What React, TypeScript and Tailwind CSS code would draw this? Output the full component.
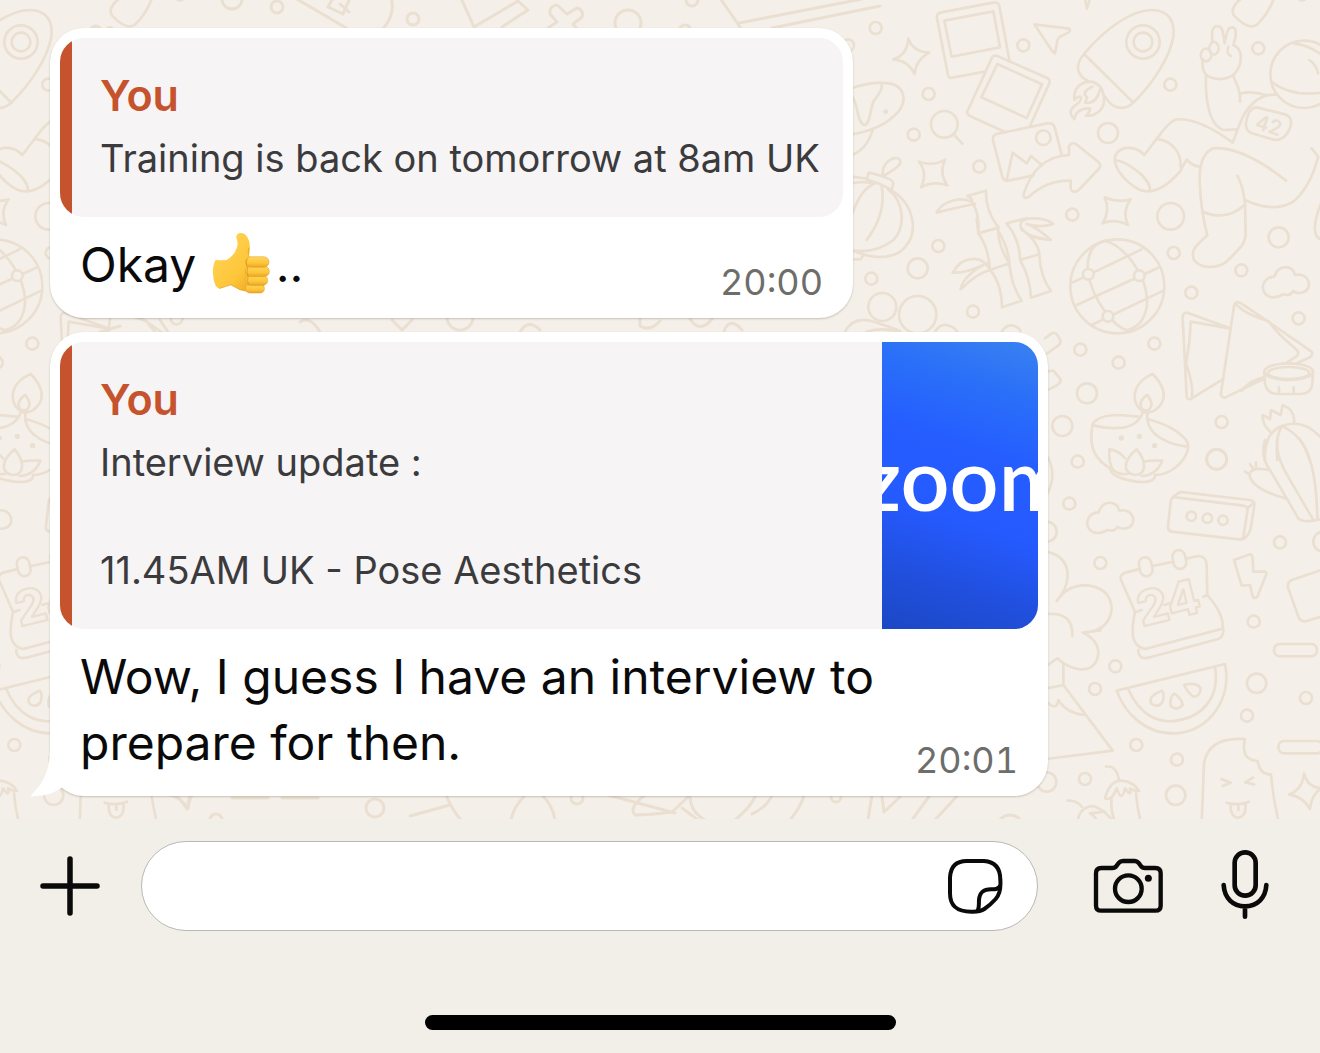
import React from 'react';

const TILE_WIDTH = 1122;

function Dots({ items, r }: { items: [number, number][]; r: number }) {
  return (
    <>
      {items.map(([x, y]) => (
        <circle key={`${x}-${y}`} cx={x} cy={y} r={r} />
      ))}
    </>
  );
}

const CLOUD =
  'M1298 232C1258 228 1258 172 1303 170C1315 130 1360 135 1365 165C1412 155 1420 212 1385 218Q1370 222 1360 213Q1350 230 1330 223Q1315 232 1298 232Z';

function Wallpaper() {
  return (
    <svg
      aria-hidden="true"
      className="pointer-events-none absolute inset-0 h-full w-full"
      fill="none"
      stroke="#eadfd1"
      strokeWidth="8"
      strokeLinecap="round"
      strokeLinejoin="round"
    >
      <g id="doodles">
        {/* rocket, photos, astronaut */}
        <g transform="translate(840 0) scale(.33333)">
          <Dots r={18} items={[[107, 84], [550, 136], [266, 282], [221, 404], [418, 500], [991, 254], [1255, 145], [697, 644], [24, 136]]} />
          <Dots r={30} items={[[804, 399], [1316, 712]]} />
          <circle cx="992" cy="649" r="40" />
          <path d="M205 115Q218 155 268 158Q228 178 224 222Q205 182 160 178Q202 165 205 115Z" />
          <path d="M237 485Q280 500 315 479Q296 520 322 556Q280 542 243 562Q264 520 237 485Z" />
          <path d="M794 592Q835 610 872 598Q845 635 864 675Q825 655 788 670Q812 630 794 592Z" />
          <path d="M508 180L478 18Q475 5 460 8L300 38Q288 42 291 55L324 225Q326 236 337 233L435 215M313 62L460 34L480 142L335 170Z" />
          <path d="M495 396L388 347Q378 340 384 330L455 175Q460 163 472 168L622 234Q632 240 628 250L570 378M472 192L606 253L560 354L424 292Z" />
          <path d="M665 465L645 385Q640 366 622 370L470 402Q457 406 459 420L487 530Q491 543 505 542L580 526M500 540L518 458L560 490L573 468L606 496" />
          <circle cx="610" cy="413" r="22" />
          <path d="M550 585Q585 470 687 465V440Q692 425 708 432L776 487Q785 497 776 507L716 570Q700 583 692 567V542Q620 540 565 592Q550 597 550 585Z" />
          <path d="M583 73L688 86Q693 90 686 97L660 110Q650 118 650 135L645 160L638 155Z" />
          <path d="M735 -6L741 26L750 -6" />
          <path d="M732 162C800 80 880 30 935 30C990 30 1005 70 1000 110C990 170 940 250 880 308ZM732 162C700 200 715 230 745 243M880 308C850 335 815 325 795 290" />
          <circle cx="909" cy="126" r="50" />
          <circle cx="909" cy="126" r="28" />
          <path d="M755 245C720 245 700 265 703 300C718 280 735 292 712 312C690 325 685 340 703 358C706 335 725 325 750 325C750 335 745 342 738 347C770 350 795 325 792 295C790 265 775 250 755 245M757 260C733 270 728 285 742 292L735 308C765 312 775 290 780 268" />
          <circle cx="1392" cy="223" r="101" />
          <path d="M1360 130C1410 135 1445 165 1445 165M1295 245Q1350 290 1445 278M1408 180Q1430 195 1434 220" />
          <path d="M1118 125C1112 90 1120 78 1132 78C1148 78 1150 100 1154 130C1160 95 1165 80 1178 82C1192 85 1188 110 1180 135C1215 150 1205 200 1180 225C1150 245 1110 238 1095 220C1085 205 1088 190 1088 178M1165 140C1160 155 1165 165 1172 168" />
          <ellipse cx="1098" cy="165" rx="16" ry="19" />
          <ellipse cx="1122" cy="145" rx="14" ry="19" />
          <path d="M1098 225C1095 290 1105 375 1150 390L1190 388M1178 225C1195 260 1202 280 1200 305M1203 280Q1240 272 1275 285" />
          <path d="M1310 284C1250 280 1215 330 1200 370L1178 428C1120 385 1060 355 1010 358Q990 362 955 410L913 465C890 440 850 435 830 460C810 490 850 545 900 570C940 585 980 560 1020 515L1040 478Q1055 497 1080 500" />
          <path d="M825 482C850 475 940 540 928 572M955 418C990 420 1025 455 1022 500" />
          <path d="M1250 322L1335 343Q1358 352 1352 378Q1338 420 1305 420L1235 400Q1215 390 1218 370Q1225 322 1250 322Z" />
          <text x="1242" y="384" transform="rotate(18 1242 384)" fontFamily="Inter, sans-serif" fontSize="62" strokeWidth="1" fill="#eadfd1" fontWeight="500">42</text>
          <path d="M1338 542C1260 480 1180 440 1120 445C1085 460 1075 500 1080 560C1082 620 1090 660 1102 706C1070 735 1050 750 1062 780C1085 810 1140 805 1165 780L1205 738Q1217 720 1217 700L1215 610Q1210 560 1192 527M1088 635Q1160 665 1213 615M1215 600C1290 635 1350 625 1380 585Q1415 545 1435 470L1415 445M1445 605C1415 680 1420 710 1445 720" />
          <path d="M1210 -8C1180 10 1170 35 1185 50Q1230 95 1255 70Q1285 40 1302 -5M1375 -4Q1385 5 1395 -2" />
          <circle cx="313" cy="373" r="40" />
          <path d="M340 402L367 431" />
          <path d="M35 265C90 245 140 245 165 255C200 275 195 310 175 335C140 375 90 395 35 403M125 255C130 270 110 290 100 305C90 330 90 375 72 375C50 365 55 315 38 292M100 385Q80 450 35 465" />
          <circle cx="137" cy="335" r="3" />
          <path d="M35 530L75 535M86 518Q160 535 160 550L155 570Q120 550 80 538ZM128 525Q125 490 160 475Q185 470 180 492Q170 505 135 525M155 572C220 610 235 690 200 735C170 780 100 780 35 750M105 550Q60 570 38 640M125 560Q140 640 80 720M145 570C190 600 200 680 160 720Q110 760 40 752M35 550Q70 543 100 550M42 778H62L70 765" />
          <path d="M290 638C310 600 370 585 405 612Q360 620 290 638M382 588L438 572Q435 630 475 683L415 700Q420 640 395 605Q400 596 382 588" />
          <path d="M500 670L560 655M545 690Q530 655 580 655Q620 655 640 672Q600 685 560 672M545 685Q560 710 632 720Q600 690 570 675" />
        </g>
        {/* bamboo, globe, napkins, lamp */}
        <g transform="translate(840 220) scale(.33333)">
          <path d="M410 -5L415 40Q445 80 450 150L508 130Q505 80 470 25L415 40M475 20Q470 70 508 130Q515 200 545 242L486 262Q485 190 450 150M500 10Q540 60 540 120L598 103Q595 70 562 42M540 120Q570 170 573 233L633 213Q600 170 598 103M545 25Q570 60 632 58" />
          <path d="M450 150Q430 110 390 118Q360 120 338 158Q380 160 440 130M450 150Q410 160 362 208Q370 165 440 130" />
          <Dots r={18} items={[[295, 78], [94, 176], [399, 275], [1001, 99], [1054, 218], [1204, 151], [1376, 295], [943, 371], [721, 389], [836, 428], [1145, 606]]} />
          <Dots r={30} items={[[233, 145], [741, 520], [667, 618], [1130, 718]]} />
          <circle cx="127" cy="261" r="42" />
          <circle cx="233" cy="284" r="56" />
          <path d="M285 335Q300 312 318 315Q340 318 352 335M485 335Q500 310 525 318Q540 325 542 335M15 335Q40 290 90 302Q120 310 180 332M80 335Q120 322 170 333" />
          <path d="M615 355L635 340Q645 335 652 345L660 358Q665 368 655 376L615 405M620 455L640 452L662 478Q662 490 650 496L620 512" />
          <circle cx="832" cy="199" r="141" />
          <path d="M743 150Q740 75 795 62C860 80 930 180 920 260Q910 320 860 330C820 320 760 240 745 165M697 188L905 88M710 255L955 143M755 315L970 212" />
          <g fill="#f4f0e9">
            <Dots r={16} items={[[745, 163], [898, 167], [804, 289]]} />
          </g>
          <path d={CLOUD} />
          <path d="M1170 325L1042 278Q1027 278 1028 292L1040 530Q1042 540 1052 537L1148 478M1168 325L1052 305Q1050 370 1038 430Q1062 500 1055 530" />
          <path d="M1275 475L1155 533Q1140 530 1143 520L1182 258Q1185 242 1200 248L1285 305L1415 395Q1420 405 1410 412L1370 430M1190 255Q1220 285 1285 303Q1310 340 1365 385Q1385 400 1365 412L1340 428M1205 512Q1230 480 1272 472" />
          <ellipse cx="1346" cy="455" rx="73" ry="25" />
          <ellipse cx="1346" cy="459" rx="62" ry="18" />
          <path d="M1273 455L1275 490Q1280 520 1310 522H1385Q1415 518 1417 490L1419 455M1317 502V520M1361 502V520" />
          <path d="M938 462Q985 510 965 550Q945 580 918 578C870 560 870 490 938 462ZM922 525Q945 555 925 570Q900 575 902 550Q905 535 922 525Z" />
          <path d="M908 578Q895 615 850 623Q800 628 757 615Q770 585 840 585L895 590M757 615C745 690 770 720 810 745M922 580V600C930 650 990 675 1043 680M925 598C990 615 1045 650 1045 680C1040 725 990 765 945 765" />
          <g fill="#eadfd1"><Dots r={4} items={[[844, 654], [898, 649], [944, 677]]} /></g>
          <path d="M1290 635Q1265 610 1268 585L1290 597L1293 570L1322 585L1328 555Q1365 570 1362 605M1275 725Q1270 640 1325 618Q1390 595 1440 650M1312 720Q1305 650 1325 620M1330 620Q1390 650 1408 720" />
        </g>
        {/* lotus, brick, calendar */}
        <g transform="translate(1030 440) scale(.33333)">
          <path d="M285 55Q265 30 238 28Q235 70 250 90Q270 108 300 100M320 28C355 70 345 105 315 105C280 100 275 65 320 28ZM340 65Q370 60 397 62Q380 105 335 108M240 85Q245 115 320 125Q370 130 375 110" />
          <path d="M705 0Q690 50 720 90L805 235Q820 250 870 238M742 -5Q735 50 780 120L850 240M808 -5Q860 60 862 238M715 90Q670 80 658 100Q660 145 765 175M645 95L658 103M660 72L668 84M678 66V80" />
          <Dots r={18} items={[[143, 65], [118, 191], [211, 369], [750, 307], [671, 545]]} />
          <Dots r={30} items={[[560, 58], [880, 305], [50, 275]]} />
          <path d="M50 45Q84 105 50 165" />
          <path d={CLOUD} transform="translate(-1097 47)" />
          <path d="M437 172L640 197Q655 198 652 215L640 290Q636 300 625 298L425 275Q412 272 414 258L422 185Q425 170 437 172M428 172L445 159Q452 155 462 157L660 180Q675 183 673 197L662 265Q655 290 638 298M652 205L672 188" />
          <Dots r={14} items={[[484, 229], [532, 235], [579, 241]]} />
          <path d="M325 388L285 398Q268 405 273 420L315 515Q305 560 309 590Q315 620 345 627L578 566V550Q575 515 532 465L530 375Q528 348 505 348L468 356M368 378L427 366M315 517L335 510M520 470L532 465M325 630Q325 660 355 653L565 597Q582 590 580 565M403 495L420 490" />
          <rect x="328" y="352" width="38" height="57" rx="19" transform="rotate(-12 347 380)" />
          <rect x="429" y="330" width="38" height="57" rx="19" transform="rotate(-12 448 358)" />
          <text x="336" y="560" transform="rotate(-14 336 560)" fontFamily="Inter, sans-serif" fontSize="144" fontWeight="800" strokeWidth="7">24</text>
          <path d="M612 360L660 343Q668 345 668 355L670 395L705 395Q712 398 708 405L682 470Q672 480 668 468L660 435L635 437Z" />
          <path d="M880 388L785 420Q770 428 775 445L805 530Q812 547 830 543L880 528" />
          <path d="M50 335Q115 350 113 410Q110 450 80 483Q115 430 180 437Q245 450 245 510Q235 575 158 578Q205 600 205 640Q200 690 150 688Q115 685 82 655L50 677M50 522Q130 515 127 588M160 578L212 571" />
        </g>
        {/* melon, ice pop, aubergines */}
        <g transform="translate(1030 630) scale(.33333)">
          <path d="M100 100V165L248 362L50 387M50 175L100 165M50 215Q80 245 85 210Q110 250 165 255" />
          <path d="M260 182L585 102C605 200 545 300 440 310C340 315 280 240 260 182ZM295 178C330 260 390 280 440 272C520 260 570 200 555 110" />
          <path d="M395 182Q405 190 398 215Q385 235 365 222Q350 200 395 182ZM432 190Q455 205 458 225Q440 245 422 228Q418 205 432 190ZM462 165Q500 155 512 175Q510 200 490 200Q475 190 462 165Z" />
          <rect x="732" y="42" width="129" height="37" rx="17" />
          <rect x="745" y="333" width="133" height="37" rx="17" />
          <Dots r={18} items={[[256, 109], [195, 177], [651, 257], [319, 345], [441, 389], [165, 447], [828, 204]]} />
          <Dots r={29} items={[[680, 160], [437, 496], [50, 456]]} />
          <path d="M515 580L522 400Q535 320 645 327Q630 390 683 393Q690 435 723 433Q730 510 747 580M575 447L602 458L578 468M670 442L646 457L672 463M590 518Q625 528 657 515M602 522Q600 562 625 563Q650 560 646 522M625 525V540" />
          <path d="M822 430Q832 472 875 475Q845 490 840 537Q820 500 777 493Q817 480 822 430Z" />
          <path d="M228 410Q260 405 267 452M225 505Q240 450 275 452Q310 455 327 483Q310 482 300 475Q305 505 285 475Q275 520 260 475Q245 515 225 505M245 510Q240 540 257 580M318 490Q322 540 334 580M113 512Q140 510 155 530M143 580Q145 530 190 528Q225 540 250 575M180 550L225 545M180 550Q200 560 200 578" />
        </g>
      </g>
      <use href="#doodles" x={-TILE_WIDTH} />
      <g strokeWidth="3">
        {/* top edge */}
        <circle cx="232" cy="-1" r="10" />
        <circle cx="277" cy="7" r="6" />
        <circle cx="413" cy="19" r="6" />
        <circle cx="96" cy="31" r="5" />
        <circle cx="628" cy="23" r="13" />
        <circle cx="692" cy="0" r="6" />
        <circle cx="685" cy="31" r="6" />
        <path d="M295 -2L348 29M391 -2Q396 14 382 30M333 -2L328 7L343 14L350 -2M340 4L349 12" />
        <path d="M461 -2L474 27L518 1L528 10L502 27M548 28L557 22L550 14Q549 6 557 5L567 14L577 8Q584 10 582 17L573 24L577 29M720 -2L740 27M739 23L862 -1M772 28L880 6" />
        {/* between the messages */}
        <path d="M100 332L120 326M160 320L168 332M300 322Q310 315 320 332M392 320L402 330L412 320M520 332Q528 318 540 330M640 319V326Q650 332 660 321M690 319Q700 334 712 319M724 331Q730 316 742 330" />
        <circle cx="460" cy="317" r="13" />
        {/* bottom edge */}
        <circle cx="375" cy="808" r="9" />
        <circle cx="216" cy="820" r="6" />
        <circle cx="577" cy="798" r="6" />
        <circle cx="836" cy="797" r="5" />
        <circle cx="1010" cy="828" r="13" />
        <path d="M177 795L187 809L190 795M232 798H268M282 798H318M410 816L450 805M446 795Q452 810 461 820M525 795Q513 808 511 820M542 795Q553 806 555 820M608 795L675 813M645 795Q628 808 635 815Q650 815 672 812L690 795M690 795Q690 812 705 820M682 808L698 820M735 820Q750 808 756 795M772 795Q768 806 752 814M790 820Q802 805 804 795M868 820L872 795M884 812L900 797M884 812L882 797M912 820L930 795M935 820L958 795" />
      </g>
    </svg>
  );
}

function ThumbsUp() {
  return (
    <svg role="img" aria-label="thumbs up" viewBox="62 36 182 188" className="-my-2 mr-1 inline-block h-[62px] w-[62px] align-[-4px]">
      <defs>
        <linearGradient id="palm" x1="0" y1="0" x2="1" y2="1">
          <stop offset="0" stopColor="#ffd65a" />
          <stop offset=".6" stopColor="#fec63a" />
          <stop offset="1" stopColor="#e59a1c" />
        </linearGradient>
        <linearGradient id="finger" x1="0" y1="0" x2="0" y2="1">
          <stop offset="0" stopColor="#ffd75c" />
          <stop offset=".6" stopColor="#fdc537" />
          <stop offset="1" stopColor="#eaa52a" />
        </linearGradient>
      </defs>
      <path fill="url(#palm)" d="M76 121Q95 122 110 121Q135 105 141 82Q145 68 139 54Q137 40 153 39Q170 40 177 62Q183 84 177 107Q182 118 218 113L222 214Q190 222 150 211L122 196Q105 200 88 207Q76 208 70 180Q64 140 76 121Z" />
      <path fill="none" stroke="#e7a226" strokeWidth="2.5" d="M88 207Q105 202 122 196L150 211Q170 217 200 219M176 84Q174 98 176 107" />
      <g fill="url(#finger)" stroke="#e09a22" strokeWidth="1.5">
        <rect x="167" y="194" width="57" height="27" rx="13" />
        <rect x="167" y="167" width="67" height="31" rx="15" />
        <rect x="166" y="140" width="73" height="31" rx="15" />
        <rect x="167" y="111" width="71" height="32" rx="16" />
      </g>
      <path fill="none" stroke="#d58a19" strokeWidth="2" d="M172 118Q165 135 174 145Q167 158 175 170Q170 182 176 196" />
    </svg>
  );
}

function Quote({ author, lines, children }: { author: string; lines: string[]; children?: React.ReactNode }) {
  return (
    <blockquote className="flex overflow-hidden rounded-[24px] bg-[#f6f4f5]">
      <div className="w-3 shrink-0 bg-[#c5532d]" />
      <div className="min-w-0 flex-1 pt-[21px] pr-5 pb-8 pl-7">
        <div className="text-[43px] leading-[72px] font-semibold text-[#c5532d]">{author}</div>
        {lines.map((line, i) => (
          <p key={i} className="min-h-[54px] text-[38px] leading-[54px] whitespace-nowrap text-[#3b3b3d]">
            {line}
          </p>
        ))}
      </div>
      {children}
    </blockquote>
  );
}

function Message({ time, quote, children, className, tail }: { time: string; quote: React.ReactNode; children: React.ReactNode; className: string; tail?: boolean }) {
  return (
    <article className={`relative rounded-[34px] bg-white p-[10px] pb-0 shadow-[0_1px_2px_rgba(60,50,30,0.25)] ${className}`}>
      {tail && (
        <svg aria-hidden="true" viewBox="0 0 50 52" className="absolute -bottom-[2px] -left-5 h-[52px] w-[50px]">
          <path fill="#fff" d="M20 0C20 22 15 36 2 48C0 50 2 51 5 50C14 50 25 47 31 42L50 30V0Z" />
        </svg>
      )}
      {quote}
      <div className="relative flex items-end justify-between pt-[15px] pr-5 pl-5">
        <p className="pb-5 text-[48px] leading-[66px] text-[#0a0a0a]">{children}</p>
        <time className="pb-4 text-[36px] leading-[40px] text-[#6d6d6b] tabular-nums">{time}</time>
      </div>
    </article>
  );
}

export default function App() {
  return (
    <div className="flex min-h-screen flex-col bg-[#f2eee8] font-['Inter',sans-serif]">
      <main className="relative flex flex-1 flex-col overflow-hidden bg-[#f4f0e9]">
        <Wallpaper />
        <div className="relative flex flex-col items-start gap-[14px] pt-7 pr-7 pb-[23px] pl-[50px]">
          <Message className="w-[803px]" time="20:00" quote={<Quote author="You" lines={['Training is back on tomorrow at 8am UK']} />}>
            Okay <ThumbsUp />..
          </Message>
          <Message
            className="w-[998px]"
            tail
            time="20:01"
            quote={
              <Quote author="You" lines={['Interview update :', '', '11.45AM UK - Pose Aesthetics']}>
                <div className="flex w-[156px] shrink-0 items-center overflow-hidden bg-[linear-gradient(198deg,#3a82f0_0%,#2a6ff8_18%,#255dff_38%,#255aff_60%,#2150df_80%,#1c48c4_100%)] pb-4">
                  <span className="-ml-5 font-[Lato,sans-serif] text-[86px] leading-none font-semibold text-white">zoom</span>
                </div>
              </Quote>
            }
          >
            Wow, I guess I have an interview to prepare for then.
          </Message>
        </div>
      </main>

      <footer className="pt-[22px] pb-6">
        <form className="flex items-center pr-[50px] pl-10" onSubmit={(e) => e.preventDefault()}>
          <button type="button" aria-label="Add attachment" className="mr-[41px] shrink-0">
            <svg viewBox="0 0 60 60" className="h-[60px] w-[60px]" fill="none" stroke="#0a0a0a" strokeWidth="5.5" strokeLinecap="round">
              <path d="M30 3V57M3 30H57" />
            </svg>
          </button>
          <div className="flex h-[90px] flex-1 items-center rounded-full border border-[#b8b8b6] bg-white pr-[33px] pl-9">
            <input type="text" aria-label="Message" className="min-w-0 flex-1 bg-transparent text-[44px] outline-none" />
            <button type="button" aria-label="Stickers" className="shrink-0">
              <svg viewBox="54 84 168 168" className="h-14 w-14" fill="none" stroke="#0a0a0a" strokeWidth="12" strokeLinejoin="round">
                <path d="M110 93H162C195 95 211 115 211 150C213 178 208 195 197 207Q182 224 163 237Q150 246 124 245C80 245 60 228 60 190V142C62 110 78 93 110 93Z" />
                <path d="M143 242C149 228 146 222 147 210C149 185 162 178 183 178Q203 179 211 168" />
              </svg>
            </button>
          </div>
          <button type="button" aria-label="Camera" className="ml-[55px] shrink-0">
            <svg viewBox="489 84 213 168" className="h-14 w-[71px]" fill="none" stroke="#0a0a0a" strokeWidth="13" strokeLinejoin="round">
              <path d="M514 114H547Q555 114 560 107L566 99Q571 93 579 93H614Q621 93 626 99L632 107Q637 114 645 114H676Q692 114 692 130V227Q692 242 676 242H514Q498 242 498 227V130Q498 114 514 114Z" />
              <circle cx="595" cy="176" r="40" />
              <circle cx="655" cy="145" r="10.5" fill="#0a0a0a" stroke="none" />
            </svg>
          </button>
          <button type="button" aria-label="Record voice message" className="mb-1 ml-[57px] shrink-0">
            <svg viewBox="873 57 147 213" className="h-[71px] w-[49px]" fill="none" stroke="#0a0a0a" strokeWidth="14" strokeLinecap="round">
              <rect x="914" y="67" width="63" height="130" rx="31.5" />
              <path d="M881 165C883 204 909 229 945 229C981 229 1007 204 1009 165M945 229V260" />
            </svg>
          </button>
        </form>
        <div className="mx-auto mt-[84px] h-[15px] w-[471px] rounded-full bg-black" />
      </footer>
    </div>
  );
}
